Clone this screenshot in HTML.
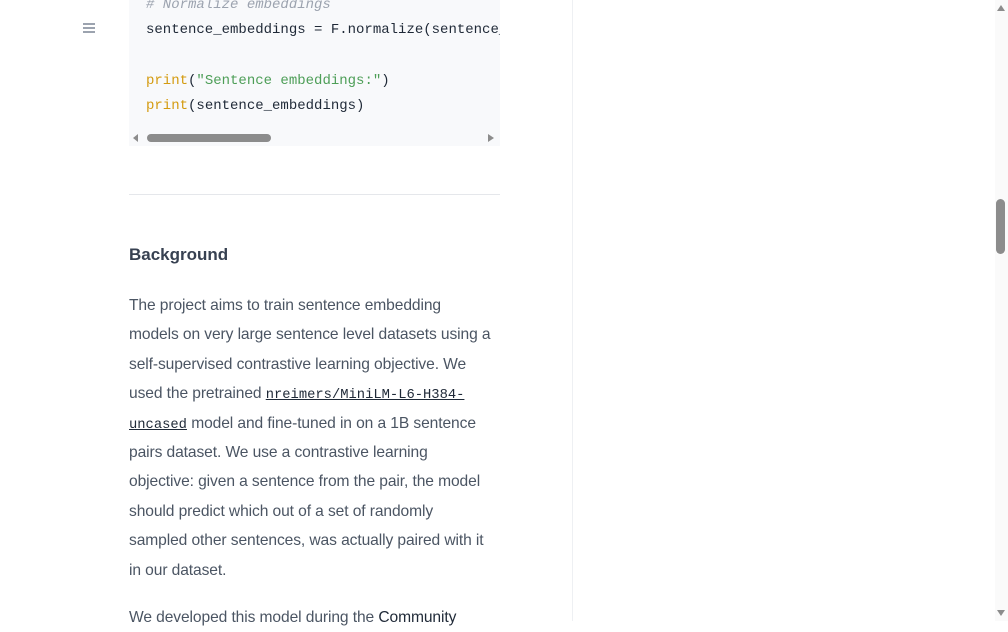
<!DOCTYPE html>
<html><head><meta charset="utf-8"><style>
body{margin:0;width:1008px;height:621px;overflow:hidden;background:#fff;position:relative;font-family:"Liberation Sans",sans-serif}
.div{position:absolute;left:572px;top:0;width:1px;height:621px;background:#eef0f3}
.code{position:absolute;left:129px;top:-10px;width:371px;height:156px;background:#f8f9fb;overflow:hidden}
.code pre{margin:0;position:absolute;left:17px;top:3px;font:14px/25.3px "Liberation Mono",monospace;color:#1f2937;white-space:pre}
.cm{color:#9ca3af;font-style:italic}.kw{color:#d49b10}.st{color:#4d9e57}
.hr{position:absolute;left:129px;top:194px;width:371px;height:1px;background:#e5e7eb}
h3{position:absolute;left:129px;top:245px;margin:0;font-size:17px;font-weight:bold;color:#374151}
.p{position:absolute;left:129px;top:291px;font-size:15.6px;line-height:29.4px;color:#4b5563;letter-spacing:-0.1px;white-space:nowrap}
.p a{font:13.8px "Liberation Mono",monospace;color:#1f2937;text-decoration:underline;letter-spacing:0}
.sb{position:absolute;left:995px;top:0;width:13px;height:621px;background:#fafafa}
</style></head><body>
<div style="position:absolute;left:83px;top:23px;width:12px">
<div style="height:1.5px;background:#9ca3af;margin-bottom:2.5px"></div><div style="height:1.5px;background:#9ca3af;margin-bottom:2.5px"></div><div style="height:1.5px;background:#9ca3af"></div></div>
<div class="code"><pre><span class="cm"># Normalize embeddings</span>
sentence_embeddings = F.normalize(sentence_embeddings, p=2, dim=1)

<span class="kw">print</span>(<span class="st">"Sentence embeddings:"</span>)
<span class="kw">print</span>(sentence_embeddings)</pre>
<div style="position:absolute;left:18px;top:144px;width:124px;height:8px;border-radius:4px;background:#8c8c8c"></div>
<div style="position:absolute;left:4px;top:144px;width:0;height:0;border-top:4px solid transparent;border-bottom:4px solid transparent;border-right:5px solid #8c8c8c"></div>
<div style="position:absolute;left:359px;top:144px;width:0;height:0;border-top:4px solid transparent;border-bottom:4px solid transparent;border-left:6px solid #8c8c8c"></div>
</div>
<div class="hr"></div>
<div class="div"></div>
<h3>Background</h3>
<div class="p">The project aims to train sentence embedding<br>models on very large sentence level datasets using a<br>self-supervised contrastive learning objective. We<br>used the pretrained <a>nreimers/MiniLM-L6-H384-</a><br><a>uncased</a> model and fine-tuned in on a 1B sentence<br>pairs dataset. We use a contrastive learning<br>objective: given a sentence from the pair, the model<br>should predict which out of a set of randomly<br>sampled other sentences, was actually paired with it<br>in our dataset.<br><div style="height:18px"></div>We developed this model during the <span style="color:#1f2937">Community</span></div>
<div class="sb">
<div style="position:absolute;left:2px;top:5px;border-left:4px solid transparent;border-right:4px solid transparent;border-bottom:6px solid #8c8c8c"></div>
<div style="position:absolute;left:1px;top:199px;width:9px;height:55px;border-radius:5px;background:#8c8c8c"></div>
<div style="position:absolute;left:2px;top:610px;border-left:4px solid transparent;border-right:4px solid transparent;border-top:6px solid #8c8c8c"></div>
</div>
</body></html>
